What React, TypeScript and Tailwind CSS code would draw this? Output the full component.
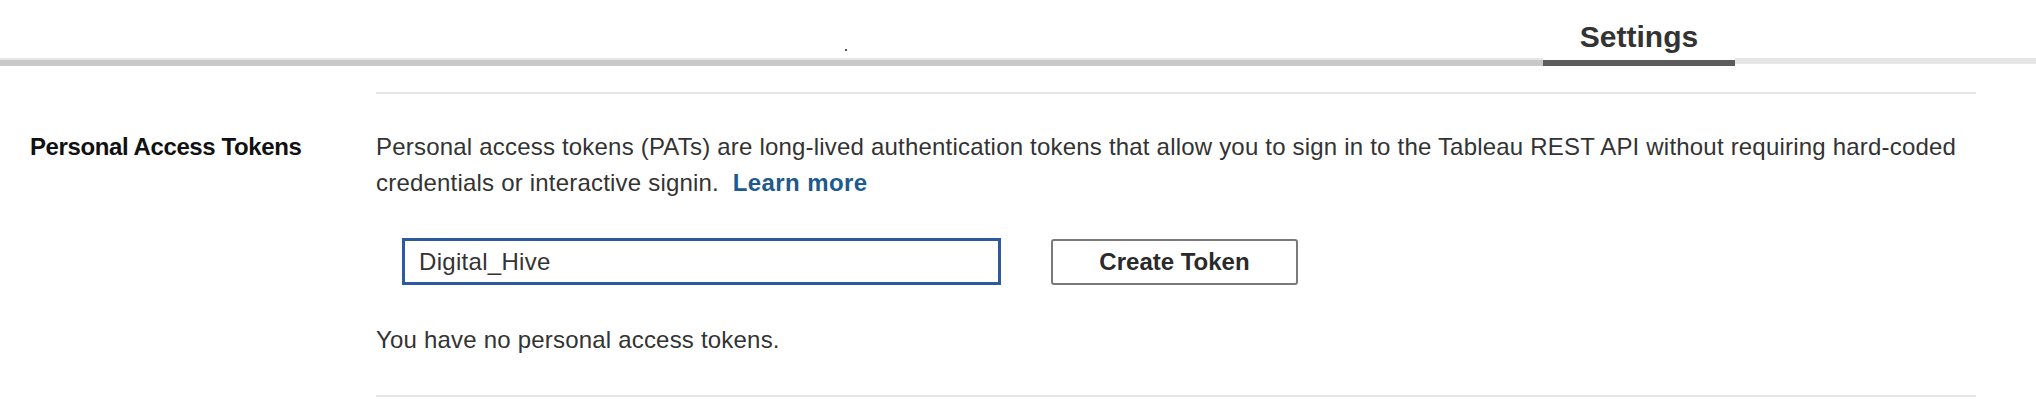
import React from "react";

export default function App() {
  return (
    <div
      className="w-[2036px] h-[416px] bg-white overflow-hidden text-[#333333]"
      style={{ fontFamily: '"Liberation Sans", Arial, sans-serif' }}
    >
      {/* Header with tabs */}
      <div className="relative flex h-[58px]">
        <div className="flex-1" />
        <div className="w-[192px] pt-[19px] text-center text-[30px] leading-[36px] font-bold text-[#333333]">
          Settings
        </div>
        <div className="w-[301px]" />
        <span className="absolute left-[845px] top-[49px] h-[2px] w-[2px] bg-[#555555]" />
      </div>
      <div className="flex items-start h-[8px]">
        <div className="flex-1 h-[8px] border-t-2 border-[#e6e6e6] bg-[#c8c8c8]" />
        <div className="w-[192px] mt-[2px] h-[6px] bg-[#5c5c5c]" />
        <div className="w-[301px] h-[6px] bg-[#e6e6e6]" />
      </div>

      {/* Divider */}
      <div className="ml-[376px] mt-[26px] w-[1600px] h-[2px] bg-[#e6e6e6]" />

      {/* Section */}
      <div className="flex mt-[35px]">
        <div className="w-[376px] pl-[30px] text-[24px] leading-[36px] font-bold text-[#111111] tracking-[-0.4px]">
          Personal Access Tokens
        </div>
        <div className="w-[1600px]">
          <p className="text-[24px] leading-[36px] text-[#333333] tracking-[0.2px]">
            Personal access tokens (PATs) are long-lived authentication tokens that allow you to sign in to the Tableau REST API without requiring hard-coded credentials or interactive signin.{"\u00a0 "}
            <a className="font-bold text-[#1f5a8c] tracking-[0.4px]" href="#">
              Learn more
            </a>
          </p>
          <div className="flex items-center mt-[37px] ml-[26px]">
            <input
              className="w-[599px] h-[47px] border-[3px] border-[#2c5aa0] pl-[14px] text-[24px] text-[#333333] tracking-[0.3px] outline-none"
              style={{ fontFamily: '"Liberation Sans", Arial, sans-serif' }}
              defaultValue="Digital_Hive"
            />
            <button
              className="ml-[50px] w-[247px] h-[46px] border-2 border-[#7a7a7a] rounded-[3px] bg-white text-[24px] font-bold text-[#2a2a2a]"
              style={{ fontFamily: '"Liberation Sans", Arial, sans-serif' }}
            >
              Create Token
            </button>
          </div>
          <p className="mt-[37px] text-[24px] leading-[36px] text-[#333333] tracking-[0.2px]">
            You have no personal access tokens.
          </p>
          <div className="mt-[37px] h-[2px] bg-[#e6e6e6]" />
        </div>
      </div>
    </div>
  );
}
